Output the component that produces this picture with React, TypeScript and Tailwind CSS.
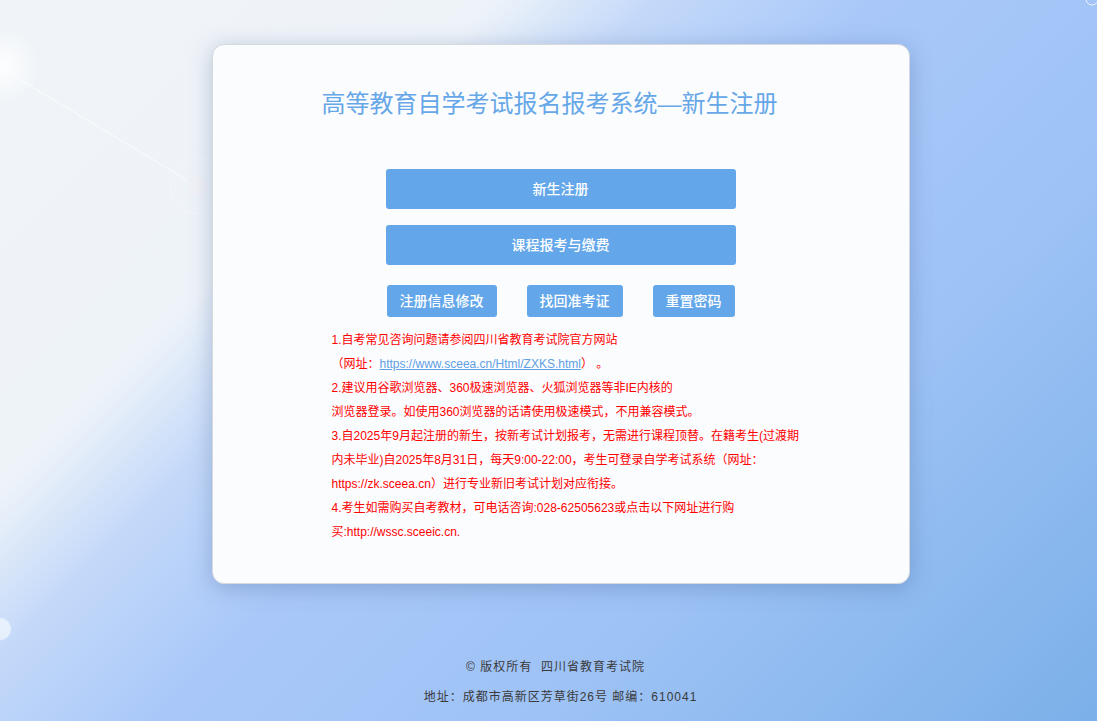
import React from "react";

const notes: { text: React.ReactNode }[] = [
  { text: "1.自考常见咨询问题请参阅四川省教育考试院官方网站" },
  {
    text: (
      <>
        （网址：
        <a href="#" className="text-[#5fa0e2] underline">
          https://www.sceea.cn/Html/ZXKS.html
        </a>
        ） 。
      </>
    ),
  },
  { text: "2.建议用谷歌浏览器、360极速浏览器、火狐浏览器等非IE内核的" },
  { text: "浏览器登录。如使用360浏览器的话请使用极速模式，不用兼容模式。" },
  { text: "3.自2025年9月起注册的新生，按新考试计划报考，无需进行课程顶替。在籍考生(过渡期" },
  { text: "内未毕业)自2025年8月31日，每天9:00-22:00，考生可登录自学考试系统（网址：" },
  { text: "https://zk.sceea.cn）进行专业新旧考试计划对应衔接。" },
  { text: "4.考生如需购买自考教材，可电话咨询:028-62505623或点击以下网址进行购" },
  { text: "买:http://wssc.sceeic.cn." },
];

function Decorations() {
  return (
    <svg className="pointer-events-none absolute inset-0" width="1097" height="721">
      <defs>
        <radialGradient id="glow">
          <stop offset="0%" stopColor="#ffffff" stopOpacity="0.9" />
          <stop offset="100%" stopColor="#ffffff" stopOpacity="0" />
        </radialGradient>
      </defs>
      <circle cx="2" cy="66" r="38" fill="url(#glow)" />
      <line x1="4" y1="70" x2="187" y2="180" stroke="#ffffff" strokeOpacity="0.7" strokeWidth="1" />
      <circle cx="198" cy="186" r="28" fill="none" stroke="#ffffff" strokeOpacity="0.25" />
      <circle cx="198" cy="186" r="10" fill="#f6eef4" fillOpacity="0.35" />
      <circle cx="0" cy="629" r="11" fill="#ffffff" fillOpacity="0.55" />
      <circle cx="1092" cy="-1" r="6" fill="none" stroke="#ffffff" strokeOpacity="0.8" />
    </svg>
  );
}

export default function App() {
  return (
    <div className="relative h-[721px] overflow-hidden bg-[linear-gradient(135deg,#f0f4f8_0%,#eef3f9_27%,#c4d9f9_36%,#a9c8f9_48%,#9dc2f5_70%,#7bb0e8_100%)] font-['Liberation_Sans','Noto_Sans_CJK_SC',sans-serif]">
      <Decorations />
      <div className="relative flex flex-col items-center pl-[24px] pt-[44px]">
        <div className="h-[540px] w-[698px] rounded-xl border border-[#d6d9de] bg-[#fbfcfe] shadow-[0_4px_22px_rgba(70,100,150,0.35)]">
          <h1 className="pr-[22px] pt-[43px] text-center text-[24px] leading-8 text-[#66a7e8]">
            高等教育自学考试报名报考系统—新生注册
          </h1>

          <div className="mx-auto mt-[49px] flex w-[350px] flex-col gap-4">
            <button className="h-10 rounded-[3px] bg-[#63a7ea] text-[14px] font-medium text-white">
              新生注册
            </button>
            <button className="h-10 rounded-[3px] bg-[#63a7ea] text-[14px] font-medium text-white">
              课程报考与缴费
            </button>
          </div>

          <div className="mt-5 flex justify-center gap-[30px]">
            <button className="h-8 w-[110px] rounded-[3px] bg-[#63a7ea] text-[14px] font-medium text-white">
              注册信息修改
            </button>
            <button className="h-8 w-[96px] rounded-[3px] bg-[#63a7ea] text-[14px] font-medium text-white">
              找回准考证
            </button>
            <button className="h-8 w-[82px] rounded-[3px] bg-[#63a7ea] text-[14px] font-medium text-white">
              重置密码
            </button>
          </div>

          <div className="ml-[119px] mt-[11px] text-[12px] leading-6 text-[#ff0000]">
            {notes.map((n, i) => (
              <div key={i} className="whitespace-nowrap">
                {n.text}
              </div>
            ))}
          </div>
        </div>

        <div className="mt-[68px] text-center text-[12px] leading-[30px] tracking-[1px] text-[#3a3a3a]">
          <div className="pr-[10px]">© 版权所有&nbsp;&nbsp;四川省教育考试院</div>
          <div>地址：成都市高新区芳草街26号 邮编：610041</div>
        </div>
      </div>
    </div>
  );
}
